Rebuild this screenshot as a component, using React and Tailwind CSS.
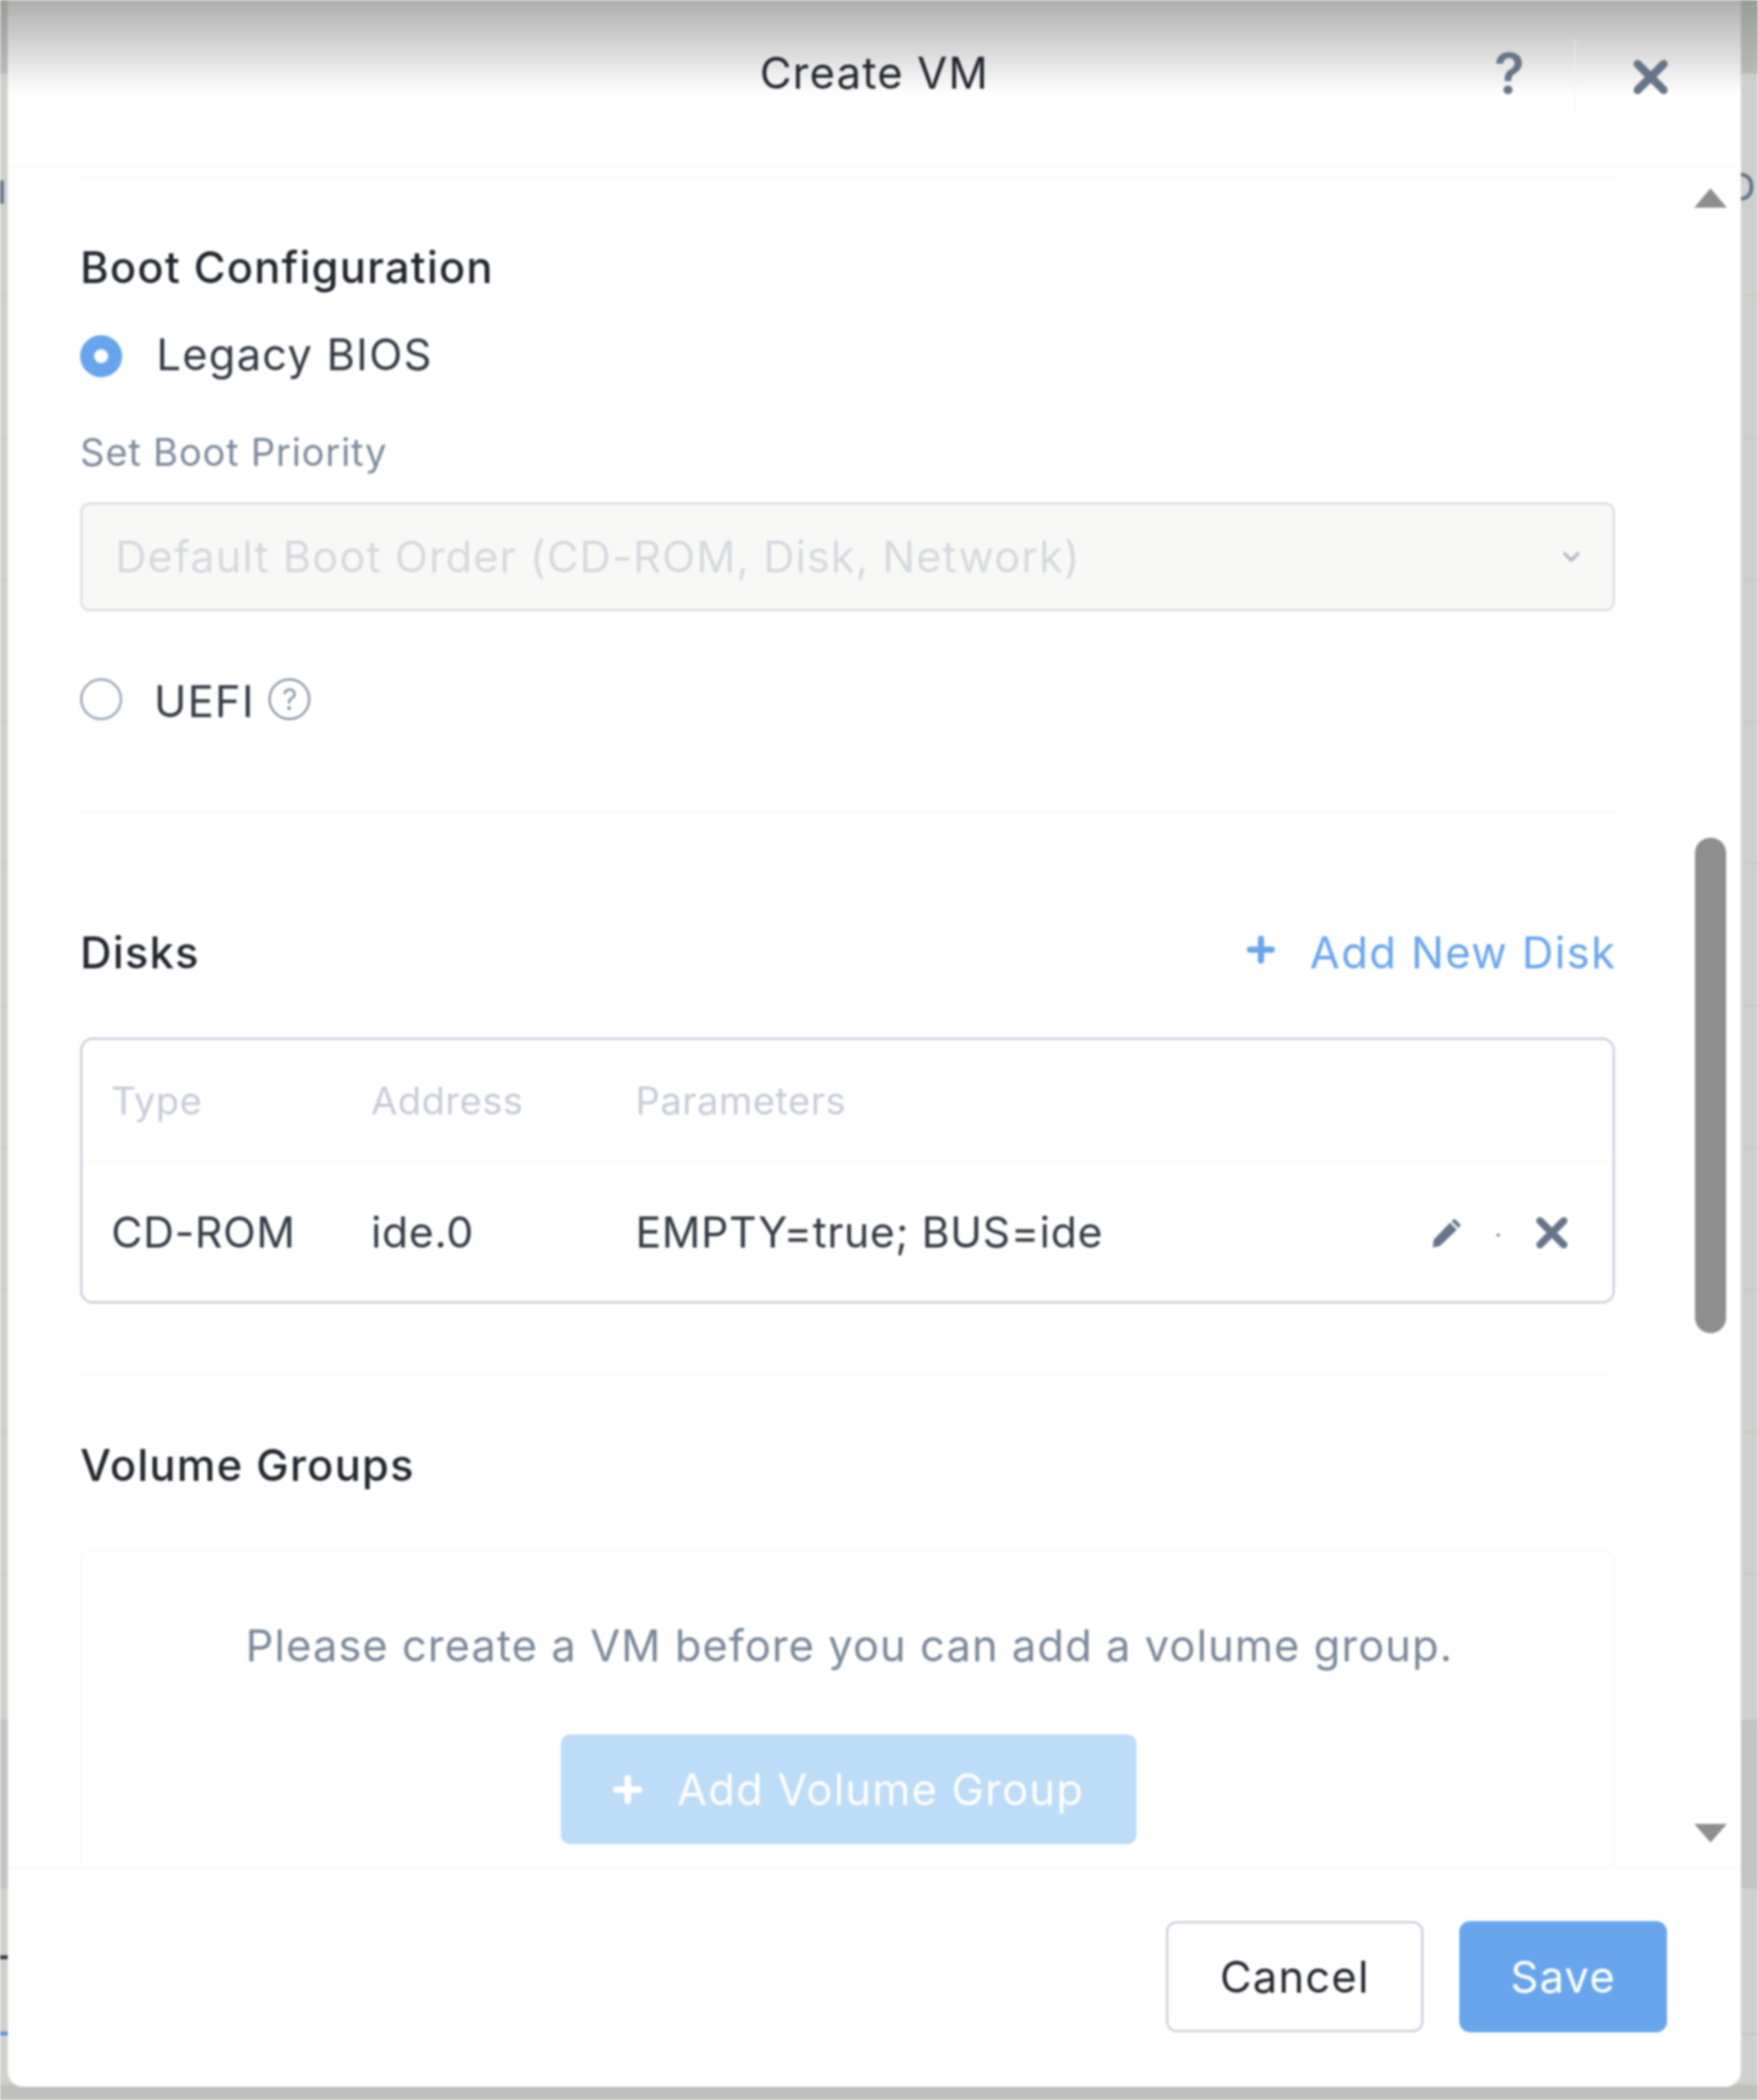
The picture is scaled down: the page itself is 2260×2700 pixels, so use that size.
import React from "react";
import { ChevronDown } from "lucide-react";

const pageRows = [0, 1, 2, 3, 4, 5, 6, 7, 8, 9];

function Radio({ checked }) {
  return checked ? (
    <span className="block w-[54px] h-[54px] rounded-full border-[18px] border-[#68a5ec] bg-white shrink-0" />
  ) : (
    <span className="block w-[54px] h-[54px] rounded-full border-[3px] border-[#9aa4b2] bg-white shrink-0" />
  );
}

function Cross({ className }) {
  return (
    <svg viewBox="0 0 44 44" className={className} fill="none" stroke="currentColor" strokeWidth="10" strokeLinecap="round">
      <path d="M6 6 L38 38 M38 6 L6 38" />
    </svg>
  );
}

function PlusIcon({ className }) {
  return (
    <svg viewBox="0 0 36 36" className={className} fill="none" stroke="currentColor" strokeWidth="8" strokeLinecap="round">
      <path d="M18 4 V32 M4 18 H32" />
    </svg>
  );
}

function PencilIcon({ className }) {
  return (
    <svg viewBox="0 0 42 42" className={className} fill="currentColor">
      <path d="M31 3 L39 11 L36 15 L27 6 Z M25 8 L34 17 L12 38 L3 40 L4 30 Z" />
    </svg>
  );
}

function Divider() {
  return <div className="h-[2px] bg-[#f7f8f6] shrink-0" />;
}

export default function App() {
  return (
    <div className="w-[2260px] h-[2700px] bg-[#cfd0ce] overflow-hidden relative font-['Inter',sans-serif] blur-[1.4px]">
      <div className="absolute left-0 right-0 top-0 h-[95px] bg-gradient-to-b from-[#9a9c9a] to-[#b9bab8]" />
      <div className="absolute left-0 right-0 top-[379px] flex flex-col">
        {pageRows.map((r) => (
          <div key={r} className="h-[182.6px] border-t-2 border-[#c6c7c5]" />
        ))}
      </div>
      <div className="absolute left-0 right-0 top-[2211px] h-[217px] bg-[#c3c4c3]" />
      <div className="absolute left-0 right-0 top-[2614px] h-[2px] bg-[#c3c4c2]" />
      <div className="absolute left-0 right-0 bottom-0 h-[20px] bg-[#bfc0be]" />
      <div className="absolute left-[2238px] top-[222px] w-[16px] h-[36px] rounded-r-full border-[5px] border-l-0 border-[#66758a]" />
      <div className="absolute left-0 top-[232px] w-[5px] h-[30px] bg-[#66758a]" />
      <div className="absolute left-0 top-[2514px] w-[10px] h-[5px] bg-[#333a44]" />
      <div className="absolute left-0 top-[2612px] w-[10px] h-[5px] bg-[#5b93d8]" />

      <div className="relative ml-[10px] w-[2228px] h-[2683px] bg-white rounded-b-[20px] flex flex-col overflow-hidden">
        <header className="h-[214px] shrink-0 border-b-2 border-[#f8f8f8] bg-[linear-gradient(to_bottom,#aeaeae_0px,#ffffff_122px)] grid grid-cols-[1fr_auto_1fr] pb-[26px]">
          <div />
          <div className="flex items-center text-[56px] tracking-[1.5px] text-[#22272e] pt-[2px]">Create VM</div>
          <div className="flex items-start justify-end pt-[50px]">
            <span className="text-[72px] font-semibold leading-[72px] text-[#66758a] mt-[8px]">?</span>
            <span className="w-[1px] h-[95px] bg-[#f2f2f2] ml-[64px]" />
            <Cross className="w-[46px] h-[46px] text-[#66758a] ml-[74px] mt-[26px] mr-[93px]" />
          </div>
        </header>

        <div className="flex-1 min-h-0 flex pl-[93px] overflow-hidden">
          <main className="w-[1973px] shrink-0 flex flex-col">
            <div className="h-[13px] shrink-0" />
            <Divider />
            <h2 className="h-[68px] mt-[81px] flex items-center text-[56px] tracking-[1.5px] font-medium text-[#22272e] shrink-0">Boot Configuration</h2>
            <label className="h-[54px] mt-[53px] flex items-center shrink-0">
              <Radio checked />
              <span className="ml-[44px] mb-[5px] text-[56px] tracking-[1.5px] text-[#333a44]">Legacy BIOS</span>
            </label>
            <div className="h-[60px] mt-[67px] flex items-center text-[49px] tracking-[1px] text-[#7d8a9c] shrink-0">Set Boot Priority</div>
            <div className="h-[140px] mt-[34px] shrink-0 rounded-[12px] border-[3px] border-[#dcdfe4] bg-[#f8f9f7] flex items-center justify-between pl-[42px] pr-[36px]">
              <span className="text-[56px] tracking-[1.2px] text-[#d5d8de]">Default Boot Order (CD-ROM, Disk, Network)</span>
              <ChevronDown className="w-[34px] h-[34px] text-[#b4bac4]" strokeWidth={3} />
            </div>
            <label className="h-[54px] mt-[86px] flex items-center shrink-0">
              <Radio />
              <span className="ml-[41px] text-[56px] tracking-[1.5px] text-[#333a44] mt-[6px]">UEFI</span>
              <span className="ml-[18px] w-[54px] h-[54px] rounded-full border-[3px] border-[#8e98a6] flex items-center justify-center text-[38px] text-[#8e98a6]">?</span>
            </label>
            <div className="h-[116px] shrink-0" />
            <Divider />
            <div className="h-[80px] mt-[141px] flex items-center justify-between shrink-0">
              <span className="text-[56px] tracking-[1.5px] font-medium text-[#22272e]">Disks</span>
              <span className="flex items-center text-[56px] tracking-[1.8px] text-[#68a5ec] mr-[-2px]">
                <PlusIcon className="w-[36px] h-[36px] mb-[8px] mr-[45px]" />
                Add New Disk
              </span>
            </div>
            <div className="h-[342px] mt-[69px] shrink-0 rounded-[16px] border-[3px] border-[#c9cedb] flex flex-col">
              <div className="h-[159px] shrink-0 border-b-2 border-[#f8f8f6] flex items-center pl-[37px] text-[49px] tracking-[0.6px] text-[#c6cbd6]">
                <span className="w-[334px]">Type</span>
                <span className="w-[340px]">Address</span>
                <span>Parameters</span>
              </div>
              <div className="flex-1 flex items-center pl-[37px] text-[55px] tracking-[0.8px] text-[#333a44]">
                <span className="w-[334px]">CD-ROM</span>
                <span className="w-[340px]">ide.0</span>
                <span>EMPTY=true; BUS=ide</span>
                <span className="ml-auto flex items-center text-[#66758a] pr-[57px]">
                  <PencilIcon className="w-[42px] h-[42px]" />
                  <span className="block w-[4px] h-[4px] rounded-full bg-[#66758a] ml-[43px] mt-[6px]" />
                  <Cross className="w-[42px] h-[42px] ml-[46px]" />
                </span>
              </div>
            </div>
            <div className="h-[92px] shrink-0" />
            <Divider />
            <h2 className="h-[68px] mt-[80px] flex items-center text-[56px] tracking-[1.5px] font-medium text-[#22272e] shrink-0">Volume Groups</h2>
            <div className="mt-[76px] flex-1 border-2 border-b-0 border-[#f8f8f6] rounded-t-[10px] flex flex-col items-center pt-[86px]">
              <p className="h-[68px] ml-[5px] flex items-center text-[56px] tracking-[1.3px] text-[#7a8899]">Please create a VM before you can add a volume group.</p>
              <button className="mt-[80px] ml-[3px] w-[740px] h-[141px] rounded-[12px] bg-[#bcdcf8] text-white text-[56px] tracking-[1.5px] flex items-center justify-center">
                <PlusIcon className="w-[38px] h-[38px] mr-[44px]" />
                Add Volume Group
              </button>
            </div>
          </main>

          <div className="ml-[102px] w-[42px] shrink-0 flex flex-col items-center">
            <span className="mt-[28px] w-0 h-0 border-x-[21px] border-x-transparent border-b-[25px] border-b-[#8e8e8e]" />
            <span className="mt-[810px] w-[40px] h-[637px] rounded-full bg-[#8e8e8e]" />
            <span className="mt-[631px] w-0 h-0 border-x-[21px] border-x-transparent border-t-[24px] border-t-[#8e8e8e]" />
          </div>
        </div>

        <footer className="h-[283px] shrink-0 border-t-2 border-[#f7f8f6] flex justify-end items-start gap-[46px] pt-[68px] pr-[95px]">
          <button className="w-[331px] h-[143px] rounded-[14px] border-[3px] border-[#cdd0da] bg-white text-[56px] tracking-[1.5px] text-[#22272e]">Cancel</button>
          <button className="w-[267px] h-[143px] rounded-[14px] bg-[#68a5ec] text-[56px] tracking-[1.5px] text-white">Save</button>
        </footer>
      </div>
    </div>
  );
}
